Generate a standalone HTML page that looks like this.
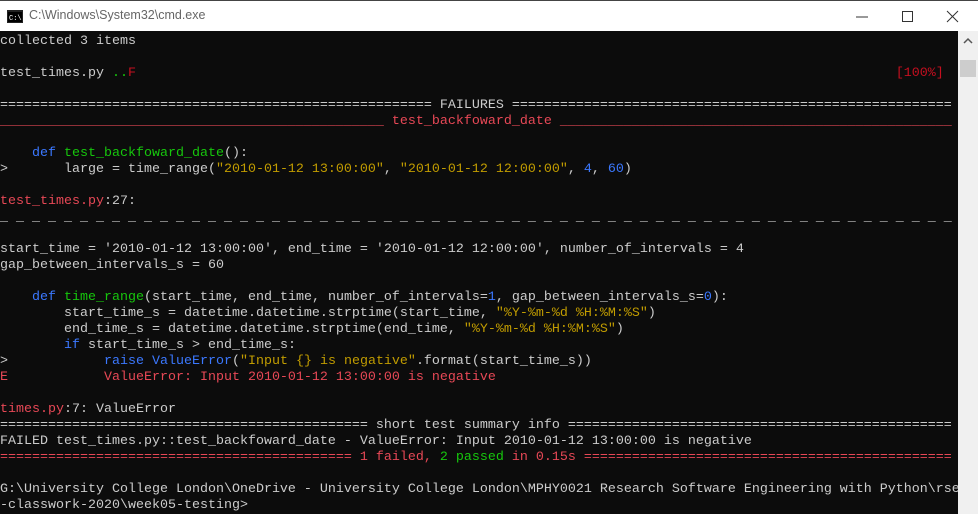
<!DOCTYPE html>
<html><head><meta charset="utf-8"><style>
body{margin:0;width:978px;height:514px;overflow:hidden;background:#0c0c0c;position:relative}
#tb{position:absolute;left:0;top:0;width:978px;height:31px;background:#fff;border-top:1px solid #444;box-sizing:border-box}
#tb .t{position:absolute;left:29px;top:7px;font:12.5px "Liberation Sans",sans-serif;color:#666}
#term{position:absolute;left:0;top:34px;width:958px;font:13.33px/16px "Liberation Mono",monospace;color:#cccccc;white-space:pre}
#sb{position:absolute;left:958px;top:31px;width:20px;height:483px;background:#f0f0f0}
.r{color:#e74856}.g{color:#16c60c}.b{color:#3b78ff}.y{color:#c19c00}.dr{color:#c50f1f}
</style></head><body>
<div id="tb">
<svg style="position:absolute;left:7px;top:9px" width="16" height="13"><rect x="0" y="0" width="16" height="13" fill="#222"/><rect x="1" y="2" width="14" height="10" fill="#000"/><text x="2" y="10" font-size="7" fill="#fff" font-family="Liberation Mono">C:\</text></svg>
<div class="t">C:\Windows\System32\cmd.exe</div>
<svg style="position:absolute;left:850px;top:8px" width="120" height="16"><line x1="6" y1="8" x2="18" y2="8" stroke="#333"/><rect x="52.5" y="2.5" width="10" height="10" fill="none" stroke="#333"/><path d="M97 2 L108 13 M108 2 L97 13" stroke="#333"/></svg>
</div>
<div id="term">collected 3 items

test_times.py <span class="g">..</span><span class="dr">F</span>                                                                                               <span class="dr">[100%]</span>

====================================================== FAILURES =======================================================
<span class="r">________________________________________________ test_backfoward_date _________________________________________________</span>

    <span class="b">def</span> <span class="g">test_backfoward_date</span>():
&gt;       large = time_range(<span class="y">"2010-01-12 13:00:00"</span>, <span class="y">"2010-01-12 12:00:00"</span>, <span class="b">4</span>, <span class="b">60</span>)

<span class="r">test_times.py</span>:27:
_ _ _ _ _ _ _ _ _ _ _ _ _ _ _ _ _ _ _ _ _ _ _ _ _ _ _ _ _ _ _ _ _ _ _ _ _ _ _ _ _ _ _ _ _ _ _ _ _ _ _ _ _ _ _ _ _ _ _ _

start_time = '2010-01-12 13:00:00', end_time = '2010-01-12 12:00:00', number_of_intervals = 4
gap_between_intervals_s = 60

    <span class="b">def</span> <span class="g">time_range</span>(start_time, end_time, number_of_intervals=<span class="b">1</span>, gap_between_intervals_s=<span class="b">0</span>):
        start_time_s = datetime.datetime.strptime(start_time, <span class="y">"%Y-%m-%d %H:%M:%S"</span>)
        end_time_s = datetime.datetime.strptime(end_time, <span class="y">"%Y-%m-%d %H:%M:%S"</span>)
        <span class="b">if</span> start_time_s &gt; end_time_s:
&gt;            <span class="b">raise</span> <span class="b">ValueError</span>(<span class="y">"Input {} is negative"</span>.format(start_time_s))
<span class="r">E            ValueError: Input 2010-01-12 13:00:00 is negative</span>

<span class="r">times.py</span>:7: ValueError
============================================== short test summary info ================================================
FAILED test_times.py::test_backfoward_date - ValueError: Input 2010-01-12 13:00:00 is negative
<span class="r">============================================ 1 failed, </span><span class="g">2 passed</span><span class="r"> in 0.15s ==============================================</span>

G:\University College London\OneDrive - University College London\MPHY0021 Research Software Engineering with Python\rse
-classwork-2020\week05-testing&gt;</div>
<div id="sb"><svg style="position:absolute;left:5px;top:6px" width="10" height="8"><path d="M1 6 L5 2 L9 6" stroke="#555" stroke-width="1.5" fill="none"/></svg><div style="position:absolute;left:2px;top:29px;width:16px;height:17px;background:#cdcdcd"></div></div>
</body></html>
